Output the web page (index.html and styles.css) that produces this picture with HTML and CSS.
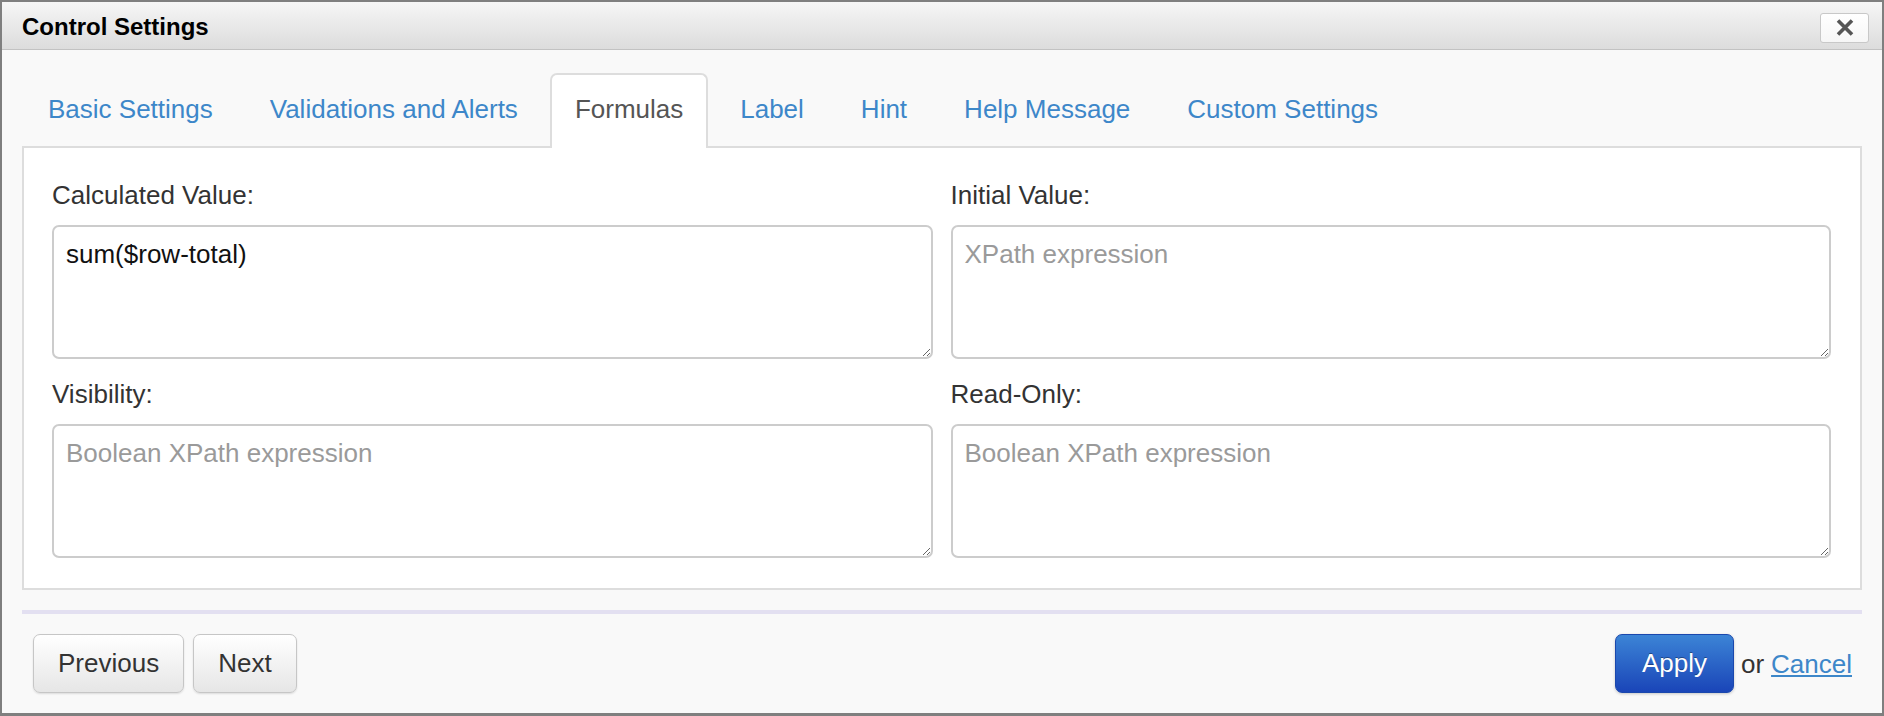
FILE: index.html
```html
<!DOCTYPE html>
<html>
<head>
<meta charset="utf-8">
<title>Control Settings</title>
<link rel="stylesheet" href="styles.css">
</head>
<body>
<div class="dialog">
  <div class="dialog-header">
    <span class="dialog-title">Control Settings</span>
    <button class="close-btn" aria-label="Close">
      <svg width="18" height="17" viewBox="0 0 18 17"><path d="M2 1.5 L16 15.5 M16 1.5 L2 15.5" stroke="#555" stroke-width="3.6" stroke-linecap="butt"/></svg>
    </button>
  </div>
  <div class="dialog-body">
    <ul class="tabs">
      <li class="tab"><a href="#">Basic Settings</a></li>
      <li class="tab"><a href="#">Validations and Alerts</a></li>
      <li class="tab active"><a href="#">Formulas</a></li>
      <li class="tab"><a href="#">Label</a></li>
      <li class="tab"><a href="#">Hint</a></li>
      <li class="tab"><a href="#">Help Message</a></li>
      <li class="tab"><a href="#">Custom Settings</a></li>
    </ul>
    <div class="panel">
      <div class="field">
        <label class="field-label">Calculated Value:</label>
        <textarea class="field-input">sum($row-total)</textarea>
      </div>
      <div class="field">
        <label class="field-label">Initial Value:</label>
        <textarea class="field-input" placeholder="XPath expression"></textarea>
      </div>
      <div class="field">
        <label class="field-label">Visibility:</label>
        <textarea class="field-input" placeholder="Boolean XPath expression"></textarea>
      </div>
      <div class="field">
        <label class="field-label">Read-Only:</label>
        <textarea class="field-input" placeholder="Boolean XPath expression"></textarea>
      </div>
    </div>
    <div class="separator"></div>
    <div class="footer">
      <div class="nav-buttons">
        <button class="btn">Previous</button>
        <button class="btn">Next</button>
      </div>
      <div class="actions">
        <button class="btn btn-primary">Apply</button>
        <span class="or">or</span>
        <a href="#" class="cancel">Cancel</a>
      </div>
    </div>
  </div>
</div>
</body>
</html>
```

FILE: styles.css
```css
* { box-sizing: border-box; }
html, body {
  margin: 0;
  padding: 0;
  background: #ffffff;
}
body {
  font-family: "Liberation Sans", Arial, Helvetica, sans-serif;
  font-size: 26px;
  line-height: 30px;
  color: #333;
}
.dialog {
  width: 1884px;
  height: 716px;
  border: 2px solid #7f7f7f;
  border-bottom-width: 3px;
  background: #f9f9f9;
  display: flex;
  flex-direction: column;
}
.dialog-header {
  height: 50px;
  display: flex;
  align-items: center;
  justify-content: space-between;
  padding: 0 13px 0 20px;
  background: linear-gradient(#f6f6f6, #dcdcdc);
  border-bottom: 1px solid #c2c2c2;
}
.dialog-title {
  font-weight: bold;
  font-size: 24px;
  color: #000;
  padding-top: 2px;
}
.close-btn {
  width: 49px;
  height: 30px;
  margin-top: 4px;
  padding: 0;
  display: flex;
  align-items: center;
  justify-content: center;
  background: linear-gradient(#ffffff, #f6f6f6);
  border: 1px solid #c8c8c8;
  border-radius: 3px;
}
.dialog-body {
  padding: 22px 20px 20px 20px;
  display: flex;
  flex-direction: column;
}
.tabs {
  list-style: none;
  margin: 1px 0 -2px 0;
  padding: 0 0 0 1px;
  display: flex;
  gap: 7px;
  position: relative;
  z-index: 1;
}
.tab {
  padding: 19px 23px 22px 23px;
  border: 2px solid transparent;
  border-bottom: none;
  border-radius: 7px 7px 0 0;
}
.tab a {
  color: #3d87c9;
  text-decoration: none;
}
.tab.active {
  background: #fff;
  border-color: #dddddd;
  padding-bottom: 24px;
}
.tab.active a {
  color: #555;
}
.panel {
  background: #fff;
  border: 2px solid #dddddd;
  padding: 32px 29px 30px 28px;
  display: grid;
  grid-template-columns: 1fr 1fr;
  column-gap: 18px;
  row-gap: 20px;
}
.field {
  display: flex;
  flex-direction: column;
}
.field-label {
  color: #333;
  margin-bottom: 15px;
}
.field-input {
  height: 134px;
  border: 2px solid #cccccc;
  border-radius: 7px;
  padding: 12px;
  font-family: "Liberation Sans", Arial, Helvetica, sans-serif;
  font-size: 26px;
  line-height: 30px;
  color: #111;
  background: #fff;
  resize: both;
  outline: none;
}
.field-input::placeholder {
  color: #9a9a9a;
}
.separator {
  height: 4px;
  margin-top: 20px;
  background: #e3e0f1;
}
.footer {
  margin-top: 20px;
  padding: 0 10px 0 11px;
  display: flex;
  justify-content: space-between;
  align-items: center;
}
.nav-buttons {
  display: flex;
  gap: 9px;
}
.btn {
  font-family: "Liberation Sans", Arial, Helvetica, sans-serif;
  font-size: 26px;
  line-height: 30px;
  height: 59px;
  padding: 13px 24px 14px 24px;
  color: #333;
  background: linear-gradient(#ffffff, #e6e6e6);
  border: 1px solid #c6c6c6;
  border-radius: 7px;
  box-shadow: 0 1px 2px rgba(0,0,0,0.12);
}
.btn-primary {
  padding: 13px 26px 14px 26px;
  color: #fff;
  background: linear-gradient(#3c84d6, #1a45b8);
  border-color: #1b48ad;
  text-shadow: 0 -1px 0 rgba(0,0,0,0.35);
  box-shadow: 0 1px 3px rgba(0,0,0,0.2);
}
.actions {
  display: flex;
  align-items: center;
}
.or {
  color: #333;
  margin-left: 7px;
  margin-right: 7px;
}
.cancel {
  color: #3d87c9;
  text-decoration: underline;
}
```
